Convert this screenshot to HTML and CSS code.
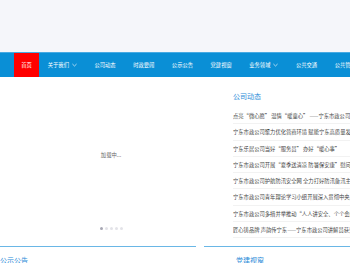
FILE: index.html
```html
<!DOCTYPE html>
<html>
<head>
<meta charset="utf-8" />
<title>宁东市政公司</title>
<link rel="stylesheet" href="styles.css">
</head>
<body>
  <header class="top"></header>
  <nav class="nav">
    <a class="nav-item active" href="javascript:;">首页</a>
    <a class="nav-item" href="javascript:;">关于我们<svg class="chev" viewBox="0 0 6 4"><path d="M0.5 0.8 L3 3.2 L5.5 0.8"/></svg></a>
    <a class="nav-item" href="javascript:;">公司动态</a>
    <a class="nav-item" href="javascript:;">时政要闻</a>
    <a class="nav-item" href="javascript:;">公示公告</a>
    <a class="nav-item" href="javascript:;">党建视窗</a>
    <a class="nav-item" href="javascript:;">业务领域<svg class="chev" viewBox="0 0 6 4"><path d="M0.5 0.8 L3 3.2 L5.5 0.8"/></svg></a>
    <a class="nav-item" href="javascript:;">公共交通</a>
    <a class="nav-item" href="javascript:;">公共管理</a>
  </nav>
  <section class="main">
    <div class="banner">
      <p class="loading">加载中...</p>
      <div class="dots">
        <span class="dot on"></span><span class="dot"></span><span class="dot"></span><span class="dot"></span><span class="dot"></span>
      </div>
    </div>
    <div class="news">
      <h3 class="title">公司动态</h3>
      <ul class="list">
        <li>点亮“微心愿” 温情“暖童心” ——宁东市政公司开展六一关爱活动</li>
        <li>宁东市政公司聚力优化营商环境 赋能宁东高质量发展</li>
        <li>宁东乐居公司当好“服务员” 办好“暖心事”</li>
        <li>宁东市政公司开展“夏季送清凉 防暑保安康”慰问活动</li>
        <li>宁东市政公司护航防汛安全网 全力打好防汛备汛主动仗</li>
        <li>宁东市政公司青年理论学习小组开展深入贯彻中央八项规定精神学习</li>
        <li>宁东市政公司多措并举推动“人人讲安全、个个会应急”</li>
        <li>匠心铸品牌 声韵传宁东——宁东市政公司讲解员获奖</li>
      </ul>
    </div>
  </section>
  <section class="lower">
    <div class="col col-left"><h3 class="title">公示公告</h3></div>
    <div class="col col-right"><h3 class="title">党建视窗</h3></div>
  </section>
</body>
</html>
```

FILE: styles.css
```css
html, body {
  margin: 0;
  padding: 0;
}
body {
  width: 350px;
  overflow: hidden;
  background: #fff;
  font-family: "Noto Sans CJK SC", "Noto Sans", sans-serif;
  color: #333;
}
.top {
  height: 52px;
  background: #f5f6fa;
}
.nav {
  display: flex;
  height: 24px;
  padding-left: 14px;
  border-top: 1px solid #47aae3;
  background: #0a8fd6;
  white-space: nowrap;
  overflow: hidden;
}
.nav-item {
  display: flex;
  align-items: center;
  flex-shrink: 0;
  padding: 0 8.75px;
  color: #fff;
  font-size: 5.3px;
  text-decoration: none;
}
.nav-item.active {
  width: 25px;
  padding: 0;
  justify-content: center;
  background: #ff0000;
}
.chev {
  width: 5px;
  height: 4px;
  margin-left: 3px;
  fill: none;
  stroke: #fff;
  stroke-width: 0.8;
}
.main {
  display: flex;
}
.banner {
  position: relative;
  flex-shrink: 0;
  width: 194px;
  height: 160px;
  margin-left: 14px;
}
.loading {
  margin: 0;
  padding-top: 74px;
  text-align: center;
  font-size: 5.3px;
  color: #666;
}
.dots {
  position: absolute;
  left: 0;
  right: 0;
  top: 150px;
  display: flex;
  justify-content: center;
  gap: 2px;
}
.dot {
  width: 3px;
  height: 3px;
  border-radius: 50%;
  background: #e3e3e8;
}
.dot.on {
  background: #a8a8b4;
}
.news {
  flex-shrink: 0;
  width: 200px;
  margin-left: 25px;
  padding-top: 14px;
  white-space: nowrap;
  overflow: hidden;
}
.title {
  margin: 0;
  font-size: 7px;
  font-weight: normal;
  line-height: 10px;
  color: #2a8bd8;
}
.list {
  margin: 7px 0 0;
  padding: 0;
  list-style: none;
}
.list li {
  height: 16.3px;
  line-height: 16.3px;
  font-size: 5.3px;
  color: #444;
  border-bottom: 1px solid #f2f2f2;
  box-sizing: border-box;
}
.lower {
  display: flex;
  margin-top: 8px;
}
.col {
  flex-shrink: 0;
  padding-top: 8px;
  border-top: 1px solid #6ab7e6;
}
.col-left {
  width: 196px;
}
.col-right {
  width: 146px;
  margin-left: 8px;
}
.col-right .title {
  padding-left: 32px;
}
```
